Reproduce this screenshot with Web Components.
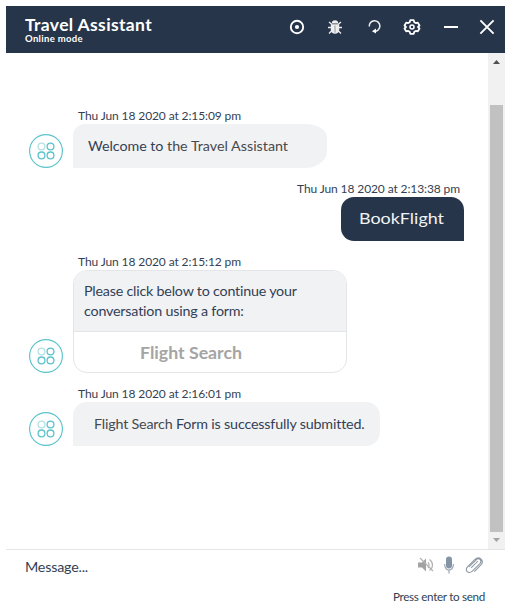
<!DOCTYPE html>
<html lang="en"><head><meta charset="utf-8"><title>Travel Assistant</title>
<style>html,body{margin:0;background:#fff}body{width:505px;height:607px;overflow:hidden;font-family:Lato,"Liberation Sans",sans-serif;color:#333f54}</style></head>
<body><chat-window></chat-window>
<script>
const define=(name,html,init)=>customElements.define(name,class extends HTMLElement{
  constructor(){super();this.attachShadow({mode:'open'}).innerHTML=html;}
  connectedCallback(){if(init)init.call(this);}
});

/* Text line that spreads its letters over a given width; "stretch" widens the glyphs instead. */
define('text-run','<style>:host{display:inline-block;white-space:pre}span{display:inline-block;transform-origin:0 50%}</style><span><slot></slot></span>',function(){
  const s=this.shadowRoot.querySelector('span');
  const n=this.textContent.length,w=+this.getAttribute('w'),b=s.getBoundingClientRect().width;
  if(this.hasAttribute('stretch'))s.style.transform=`scaleX(${w/b})`;
  else s.style.letterSpacing=((w-b)/n)+'px';
});

define('bot-avatar',`<style>:host{display:block;width:34px;height:34px;flex:none}svg{display:block}</style>
<svg width="34" height="34" viewBox="0 0 34 34" fill="none" stroke="#5cc3cb"><circle cx="17" cy="17" r="16.4" stroke-width="1.15"/>
<g stroke-width="1.3"><circle cx="12.5" cy="12.5" r="3.4" stroke="#b5e1e4"/><circle cx="21.5" cy="12.5" r="3.4"/><circle cx="12.5" cy="21.4" r="3.4"/><circle cx="21.5" cy="21.4" r="3.4"/></g></svg>`);

define('chat-header',`<style>:host{display:flex;height:47px;box-sizing:border-box;background:#27354a;color:#fff;padding:0 10px 0 19px;justify-content:space-between}
.t{display:flex;flex-direction:column;padding-top:9px}.a{font:bold 17.5px/19px Lato,sans-serif}.b{font:bold 9.5px/10px Lato,sans-serif}
.i{display:flex;align-items:center;padding-bottom:5px}svg{display:block}</style>
<div class="t"><text-run class="a" w="127">Travel Assistant</text-run><text-run class="b" w="58">Online mode</text-run></div>
<div class="i"><svg width="206" height="20" viewBox="289 17 206 20" fill="none" stroke="#fff">
<circle cx="297" cy="27" r="6.2" stroke-width="1.9"/><circle cx="297" cy="27" r="2.1" fill="#fff" stroke="none"/>
<g stroke="#eee" stroke-width="1.3"><path d="M329 22l3 2.6M341 22l-3 2.6M328 27.5h4M342 27.5h-4M329 33.5l3-3M341 33.5l-3-3"/><path d="M331.8 23.4a3.2 3.2 0 0 1 6.4 0z" fill="#eee" stroke="none"/><path d="M330.8 24.2h8.4v5.8c0 5-8.4 5-8.4 0z" fill="#eee" stroke="none"/><path d="M335 25.5v7" stroke="#8f97a2" stroke-width="1"/></g>
<path d="M369.3 26.5a5.3 5.3 0 1 1 5.3 4.8" stroke-width="1.5" stroke="#eee"/><path d="M376 28.4l-4 2.8 4 2.4z" fill="#fff" stroke="none"/>
<path d="M410.3 20.9h3.4l.6 2 1.5.9 2-.5 1.7 2.9-1.5 1.5 1.5 1.5-1.7 2.9-2-.5-1.5.9-.6 2h-3.4l-.6-2-1.5-.9-2 .5-1.7-2.9 1.5-1.5-1.5-1.5 1.7-2.9 2 .5 1.5-.9z" transform="translate(0 -.7)" stroke-width="1.8" stroke-linejoin="round"/><circle cx="412" cy="27" r="2" stroke-width="1.5"/>
<path d="M444 27h14" stroke-width="2"/><path d="M480.4 20.4l13.2 13.2M493.6 20.4l-13.2 13.2" stroke-width="1.9"/></svg></div>`);

define('chat-message',`<style>:host{display:block}
.time{font-size:12px;line-height:16px;height:16px;padding-left:49px}
.row{display:flex;align-items:flex-end;gap:10px}
.bubble{box-sizing:border-box;height:44px;padding:0 0 0 15px;background:#f1f2f4;border-radius:14px 14px 14px 0;font-size:14.3px;line-height:44px;width:var(--w);white-space:nowrap}
:host([out]) .time{padding:0 28px 0 0;text-align:right}:host([out]) .row{justify-content:flex-end;padding-right:24px}
:host([out]) bot-avatar{display:none}:host([out]) .bubble{background:#27354a;color:#f1f2f4;border-radius:13px 13px 0 13px;padding-left:18px;font-size:14.5px;line-height:43px}
:host([card]) .bubble{height:103px;background:#fff;border:1px solid #e4e5e9;border-radius:14px;padding:0;line-height:20px;overflow:hidden}
:host([first]) .bubble{border-radius:12px 22px 22px 0 / 12px 13px 17px 0}
</style><div class="time"><slot name="time"></slot></div><div class="row"><bot-avatar></bot-avatar><div class="bubble"><slot></slot></div></div>`);

define('form-card',`<style>:host{display:block}.q{box-sizing:border-box;height:61px;padding:10px;background:#f1f2f4;border-bottom:1px solid #e4e5e9}.q text-run{display:block}
.f{font:bold 17.5px/42px Lato,sans-serif;color:#a4a4a4;padding-left:66px}</style>
<div class="q"><text-run w="213">Please click below to continue your</text-run><text-run w="160">conversation using a form:</text-run></div><div class="f"><text-run stretch w="102">Flight Search</text-run></div>`);

define('scroll-bar',`<style>:host{display:flex;flex-direction:column;justify-content:space-between;width:17px;height:496px;background:#f1f1f1}svg{display:block}.th{height:428px;margin:0 2px;background:#c1c1c1}.s{flex:none;height:35px}</style>
<svg width="17" height="17"><path d="M5 11h7l-3.5-4z" fill="#505050"/></svg><div class="s"></div><div class="th"></div><svg width="17" height="17"><path d="M5 6h7l-3.5 4z" fill="#a3a3a3"/></svg>`);

define('chat-composer',`<style>:host{display:grid;grid-template-columns:1fr auto;align-items:center;grid-template-rows:35px 22px;border-top:1px solid #e3e4e6;height:58px;padding:0 20px 0 19px;box-sizing:border-box}
.m{font-size:14.3px;padding-bottom:2px}.p{font-size:11.7px;grid-column:2;justify-self:end;padding-bottom:0}svg{display:block;margin-bottom:5px;justify-self:end}</style>
<text-run class="m" w="63">Message...</text-run>
<svg width="68" height="20" viewBox="417 555 68 20"><g fill="#a2a2a2"><path d="M418 562.5h4l4-4v13l-4-4h-4z"/></g><g fill="none" stroke="#b2b2b2" stroke-width="1.2"><path d="M420 558l13 13M428 562c1.5 2 1.5 4 0 6M429.5 559.5c4 3 4 8 0 11"/></g>
<rect x="446" y="556.5" width="6" height="12" rx="3" fill="#8494a4"/><path d="M444.6 564c0 8 8.8 8 8.8 0M449 570v3.5" fill="none" stroke="#9aa6b2" stroke-width="1.2"/>
<path d="M469 567l7.2-7.2c2.8-2.6 6.5 1 3.8 3.8l-7.7 7.6c-4 3.7-8-1-4.6-4.6l7-7c4.8-4.3 10.2 1.1 6 5.6l-6.4 6.4M478 561l-6.8 6.8" fill="none" stroke="#8d98a4" stroke-width="1.05"/></svg>
<text-run class="p" w="92">Press enter to send</text-run>`);

define('chat-window',`<style>:host{display:block;padding:6px 0 0 6px;width:505px;height:607px;box-sizing:border-box}
.body{display:flex;height:496px}.feed{flex:1;display:flex;flex-direction:column;gap:13px;padding:55px 0 0 23px;box-sizing:border-box}
.k{color:#48494d}</style>
<chat-header></chat-header><div class="body"><div class="feed">
<chat-message first style="--w:254px"><text-run slot="time" w="163">Thu Jun 18 2020 at 2:15:09 pm</text-run><text-run w="79">Welcome to </text-run><text-run class="k" w="121">the Travel Assistant</text-run></chat-message>
<chat-message out style="--w:123px"><text-run slot="time" w="163">Thu Jun 18 2020 at 2:13:38 pm</text-run><text-run stretch w="85">BookFlight</text-run></chat-message>
<chat-message card style="--w:274px"><text-run slot="time" w="163">Thu Jun 18 2020 at 2:15:12 pm</text-run><form-card></form-card></chat-message>
<chat-message style="--w:307px"><text-run slot="time" w="163">Thu Jun 18 2020 at 2:16:01 pm</text-run><text-run class="k" style="margin-left:6px" w="82">Flight Search </text-run><text-run w="188">Form is successfully submitted.</text-run></chat-message>
</div><scroll-bar></scroll-bar></div><chat-composer></chat-composer>`);
</script></body></html>
